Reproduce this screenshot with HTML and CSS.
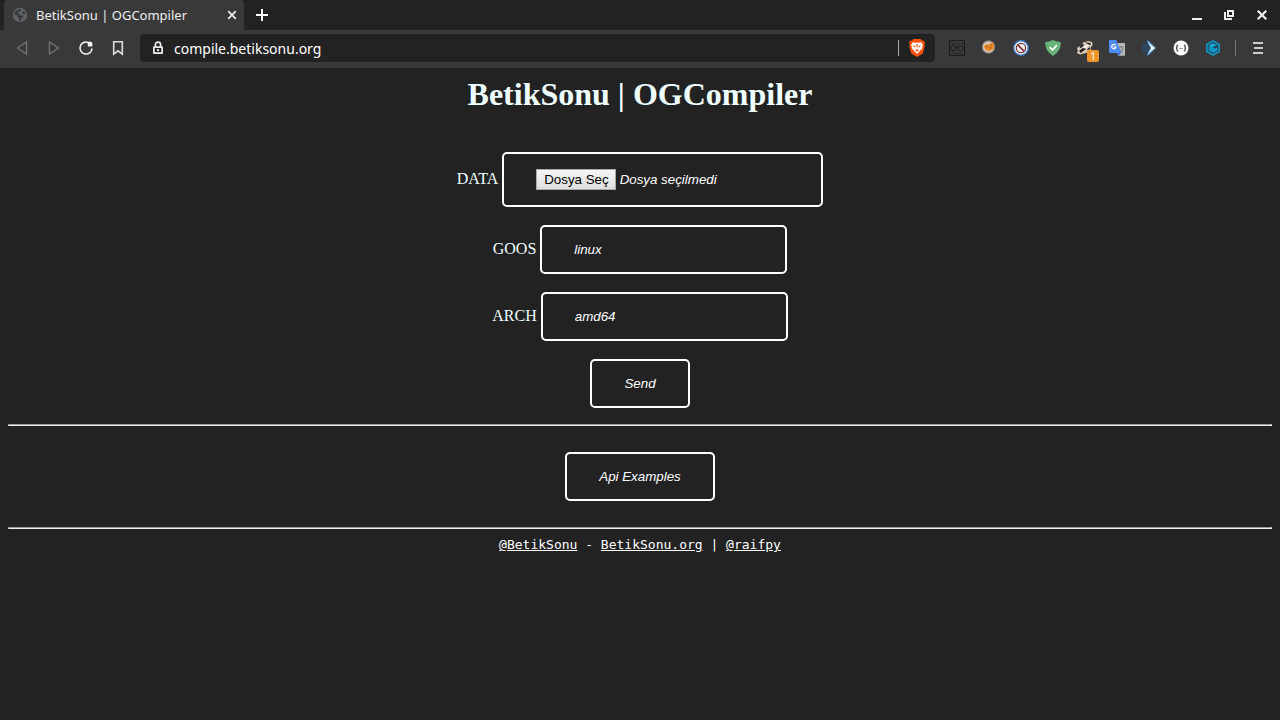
FILE: index.html
```html
<!DOCTYPE html>
<html lang="tr">
<head>
<meta charset="utf-8">
<title>BetikSonu | OGCompiler</title>
<link rel="stylesheet" href="styles.css">
</head>
<body>
<header class="browser">
  <div class="tabbar">
    <div class="tab">
      <svg class="icon" viewBox="0 0 16 16"><circle cx="8" cy="8" r="7.200" fill="#5f6368"/><path d="M9.500 2.500l-1 1.700-2.200.8-.5 1.600 1.700.3.500 1.400 2.500.2.800 1.300-1.800 1.200-.5 2.500-2 .5.200-2.500L5.600 10l.2-1.300L2.300 7.500Q2.800 3 8 2.200zM11 4.200l1.200.2 1.500 2.800-2.200.3-1.300-1.700z" fill="#393939"/></svg>
      <span class="tab-title">BetikSonu | OGCompiler</span>
      <button class="tool" aria-label="Sekmeyi kapat"><svg class="icon" viewBox="0 0 16 16"><path d="M4.200 4.200l7.600 7.600M11.800 4.200l-7.600 7.600" stroke="#eee" stroke-width="1.700"/></svg></button>
    </div>
    <button class="tool new-tab" aria-label="Yeni sekme"><svg class="icon" viewBox="0 0 16 16"><path d="M8 2v12M2 8h12" stroke="#fff" stroke-width="2"/></svg></button>
    <div class="window-controls">
      <button class="tool" aria-label="Küçült"><svg class="icon" viewBox="0 0 16 16"><path d="M2 12h10" stroke="#eee" stroke-width="2"/></svg></button>
      <button class="tool" aria-label="Geri yükle"><svg class="icon" viewBox="0 0 16 16"><path d="M6 4h5v5H6z" fill="none" stroke="#eee" stroke-width="2"/><path d="M3 5v7h7" fill="none" stroke="#eee" stroke-width="2"/></svg></button>
      <button class="tool" aria-label="Kapat"><svg class="icon" viewBox="0 0 16 16"><path d="M3.700 3.700l8.600 8.600M12.300 3.700l-8.600 8.600" stroke="#eee" stroke-width="2.200"/></svg></button>
    </div>
  </div>
  <div class="toolbar">
    <nav class="nav">
      <button class="tool" aria-label="Geri"><svg class="icon" viewBox="0 0 16 16"><path d="M12.600 1.900v12.200L3.400 8z" fill="none" stroke="#737373" stroke-width="1.300" stroke-linejoin="round"/></svg></button>
      <button class="tool" aria-label="İleri"><svg class="icon" viewBox="0 0 16 16"><path d="M3.400 1.900v12.200L12.600 8z" fill="none" stroke="#737373" stroke-width="1.300" stroke-linejoin="round"/></svg></button>
      <button class="tool" aria-label="Yenile"><svg class="icon" viewBox="0 0 16 16"><path d="M10 2.400A6 6 0 1 0 14 8.500" fill="none" stroke="#f1f1f1" stroke-width="1.600"/><path d="M9.500 2l2.500-.5 2.300 1v4h-4.300z" fill="#f1f1f1"/></svg></button>
      <button class="tool" aria-label="Yer imi"><svg class="icon" viewBox="0 0 16 16"><path d="M3.700 1.800h8.600v12.400L8 10.800l-4.300 3.400z" fill="none" stroke="#ddd" stroke-width="1.600"/></svg></button>
    </nav>
    <div class="address">
      <svg class="icon" viewBox="0 0 16 16"><path d="M5.400 7V4.800a2.600 2.600 0 0 1 5.200 0V7" fill="none" stroke="#eee" stroke-width="1.700"/><path fill="#eee" fill-rule="evenodd" d="M4 6.200h8q1 0 1 1V13q0 1-1 1H4q-1 0-1-1V7.200q0-1 1-1zM4.700 8v4.300h6.600V8z"/><circle cx="8" cy="10.100" r="1.200" fill="#eee"/></svg>
      <input class="url" type="text" aria-label="Adres" value="compile.betiksonu.org">
      <span class="divider light"></span>
      <svg class="shield" viewBox="0 0 18 18"><path d="M5.500 0h7l1.600 1.700 1.400-.2 1.500 2.300-.6 1.500.4 1.200-2 8L9 18l-5.800-3.500-2-8 .4-1.200L1 3.800l1.500-2.300 1.400.2z" fill="#fb5008"/><path d="M5 3.300l2 .5 2-.4 2 .4 2-.5 2 2.600-.8 1.700.1 1.700-2 2.300L9 15l-3.300-3.400-2-2.300.1-1.700L3 5.900z" fill="#fff"/><path d="M4.700 6.300l2.700.7-.6 1.700zM13.300 6.300l-2.700.7.600 1.700zM8.200 5h1.600L9 10.400zM6.700 11.100L9 10.400l2.300.7L9 12.700z" fill="#fb5008"/></svg>
    </div>
    <div class="extensions">
      <button class="tool" aria-label="Eklenti"><svg class="icon" viewBox="0 0 16 16"><g fill="none" stroke="#1b1b1b"><path d="M.5.5h15v15H.500z"/><path d="M1 3.500h5l2 1.500 2-1.500h5M2 13.500h12" stroke-opacity=".5"/><path d="M6.800 7.500q1.200-1 2.400 0"/><circle cx="4.200" cy="8.200" r="2.700"/><circle cx="11.800" cy="8.200" r="2.700"/></g></svg></button>
      <button class="tool" aria-label="Çerezler"><svg class="icon" viewBox="0 0 16 16"><circle cx="7.500" cy="7" r="6.700" fill="#858585"/><circle cx="7.500" cy="7" r="5.600" fill="#d8c7b5"/><path d="M2.300 7.300l3.100-3.400 3.200.7L11 2l2.200 3-.6 4-4 2.300-3.800-1-1-2z" fill="#eb8825"/><path d="M5 6.600l2 .4M8.500 8.400l2-1M9 4.700l1.500.3" stroke="#8e5a2b"/></svg></button>
      <button class="tool" aria-label="Engelleyici"><svg class="icon" viewBox="0 0 16 16"><circle cx="8" cy="8" r="7.900" fill="#397fcf"/><circle cx="8" cy="8" r="6.500" fill="#fff"/><circle cx="8" cy="8" r="4.700" fill="#f5f5f5" stroke="#80343c" stroke-width="1.300"/><path d="M4.700 4.800l6.600 6.500" stroke="#80343c" stroke-width="1.800"/></svg></button>
      <button class="tool" aria-label="Koruma"><svg class="icon" viewBox="0 0 16 16"><path d="M8 0q4 2 7.700 2.100.6 9-7.700 13.900Q-.3 11.100.3 2.100 4 2 8 0z" fill="#67b279"/><path d="M4.700 7.200l2.800 2.900 4.400-5" fill="none" stroke="#fff" stroke-width="1.700"/></svg></button>
      <button class="tool badge-host" aria-label="Porsuk"><svg class="icon" viewBox="0 0 16 16"><path d="M1 7l4-2 1-2.500 5-1.500 4 1 .8 3-2 2 .2 3-5 3-6 1.500-3-1.500 1-3-1-1z" fill="#dac7b6"/><path d="M2 7l4-3 1 1-3 3zM8 2.300l5 .7 1.300 2-3-.4zM2 11l4-3 3 1-3 2-2 2zM12.500 7l1 2-4 1.500z" fill="#181818"/><path d="M6 7l5-3 1 2-4 2z" fill="#fff"/></svg><span class="badge">1</span></button>
      <button class="tool" aria-label="Çeviri"><svg class="icon" viewBox="0 0 16 16"><path d="M6 3h10v12.700H9z" fill="#b7b9bb"/><path d="M9 7h6M12 6v1M10 8q1 3 4 5M14 8q-1 4-4 5" fill="none" stroke="#687d85"/><path d="M0 0h7.300L12 13H1q-1 0-1-1z" fill="#4b8bf4"/><path d="M8 13h4l-2.200 2.800z" fill="#3465ce"/><path d="M6.500 5.100A2.200 2.200 0 1 0 7 7.200H4.800" fill="none" stroke="#fff" stroke-width="1.200"/></svg></button>
      <button class="tool" aria-label="Ok"><svg class="icon" viewBox="0 0 16 16"><path d="M5.500.8h2L15 8l-7.500 7.200h-2L9.500 8z" fill="#4f9fe0"/><path d="M7 2.300L14 8l-7 5.700L10.300 8z" fill="#e9f7ff"/><path d="M1 5h6M2 8h7M1 11h6" stroke="#245482" stroke-width="1.300"/></svg></button>
      <button class="tool" aria-label="Betikler"><svg class="icon" viewBox="0 0 16 16"><circle cx="8" cy="8" r="7.500" fill="#fff"/><path d="M5.200 5Q3.600 5 4 6.500 4.200 8 3 8q1.200 0 1 1.500-.4 1.500 1.200 1.500M10.800 5q1.600 0 1.200 1.500Q11.800 8 13 8q-1.200 0-1 1.500.4 1.500-1.200 1.500" fill="none" stroke="#333" stroke-width="1.100"/><path d="M6.300 8.500h3.400" stroke="#999"/></svg></button>
      <button class="tool" aria-label="Küp"><svg class="icon" viewBox="0 0 16 16"><path d="M8 .9l6.200 3.600v7L8 15.100l-6.200-3.600v-7z" fill="#20495a" stroke="#129acb" stroke-width="1.500"/><path d="M8 3.300l4.200 2.400L8 8 3.800 5.700z" fill="#19aede"/><path d="M3.800 5.700L8 8v5l-4.200-2.400z" fill="#0b93c6"/><path d="M8 8l4.200-.7v3.300L8 13z" fill="#129fd0"/><path d="M7.600 6.600l4.600-.9v1.900L9.300 8.700z" fill="#174353"/></svg></button>
      <span class="divider"></span>
      <button class="tool" aria-label="Menü"><svg class="icon" viewBox="0 0 16 16"><path d="M3 3h10M4 8h9M3 13h10" stroke="#ccc" stroke-width="2"/></svg></button>
    </div>
  </div>
</header>
<main class="page">
  <h1 class="title">BetikSonu | OGCompiler</h1>
  <form class="form" onsubmit="return false">
    <div class="row">
      <label for="data">DATA</label>
      <div class="box file-box">
        <input class="file-input" id="data" type="file">
        <label class="file-button" for="data">Dosya Seç</label>
        <span>Dosya seçilmedi</span>
      </div>
    </div>
    <div class="row"><label for="goos">GOOS</label><input class="box field" id="goos" type="text" value="linux"></div>
    <div class="row"><label for="arch">ARCH</label><input class="box field" id="arch" type="text" value="amd64"></div>
    <button class="box" type="submit">Send</button>
  </form>
  <hr class="rule">
  <div class="examples"><button class="box" type="button">Api Examples</button></div>
  <hr class="rule">
  <footer class="footer"><a href="#">@BetikSonu</a> - <a href="#">BetikSonu.org</a> | <a href="#">@raifpy</a></footer>
</main>
</body>
</html>
```
FILE: styles.css
```css
* { box-sizing: border-box; }
body {
  margin: 0;
  background: #222;
  color: azure;
  font-family: "Liberation Serif", serif;
  font-size: 16px;
}
.browser { font-family: "Noto Sans", sans-serif; color: #eee; }
.tabbar { display: flex; align-items: center; height: 30px; padding: 0 10px 0 4px; background: #222; }
.tab {
  display: flex;
  align-items: center;
  gap: 8px;
  width: 240px;
  height: 30px;
  padding: 0 4px 0 8px;
  border-radius: 4px 4px 0 0;
  background: #393939;
}
.tab-title { flex: 1; font-size: 13px; white-space: nowrap; }
.icon { display: block; width: 16px; height: 16px; flex: none; }
.tool { flex: none; padding: 0; border: 0; background: none; }
.new-tab { margin-left: 10px; }
.window-controls { display: flex; gap: 16px; margin-left: auto; }
.toolbar { display: flex; align-items: center; height: 38px; padding: 0 14px 2px; background: #393939; }
.nav { display: flex; gap: 16px; }
.address {
  display: flex;
  align-items: center;
  flex: 1;
  height: 28px;
  margin: 0 14px;
  padding: 0 9px 0 10px;
  border-radius: 4px;
  background: #222;
}
.url {
  flex: 1;
  min-width: 0;
  padding: 0 8px;
  border: 0;
  background: none;
  color: #fff;
  font-family: inherit;
  font-size: 14px;
}
.divider { width: 1px; height: 16px; background: #777; }
.light { margin-right: 9px; background: #aaa; }
.shield { width: 18px; height: 18px; }
.extensions { display: flex; align-items: center; gap: 16px; }
.extensions .divider { margin: 0 -2px; }
.badge-host { position: relative; }
.badge {
  position: absolute;
  top: 10px;
  left: 10px;
  width: 12px;
  height: 12px;
  border-radius: 2px;
  background: #ed9528;
  color: #fff;
  font: 10px/12px "Noto Sans", sans-serif;
  text-align: center;
}
.page { padding: 8px; }
.title { margin: 0 0 39px; font-size: 32px; line-height: 37px; text-align: center; }
.form { display: flex; flex-direction: column; align-items: center; gap: 18px; }
.row { display: flex; align-items: baseline; gap: 4px; }
.box {
  padding: 15px 32px;
  border: 2px solid #fff;
  border-radius: 5px;
  background: transparent;
  color: #fff;
  font: italic 10pt/15px "Liberation Sans", sans-serif;
}
.field { width: 247px; }
.file-box { position: relative; display: flex; align-items: baseline; gap: 4px; width: 321px; }
.file-input { position: absolute; width: 1px; height: 1px; opacity: 0; }
.file-button {
  padding: 2px 6px 2px 7px;
  border: 1px solid #a9a9a9;
  background: linear-gradient(#f6f6f6, #dedede);
  color: #000;
  font-style: normal;
}
.rule { margin: 16px 0 0; border: 1px inset #eee; }
.examples { display: flex; justify-content: center; padding: 26px 0 10px; }
.footer {
  margin-top: 8px;
  color: #fff;
  font-family: "DejaVu Sans Mono", monospace;
  font-size: 13px;
  line-height: 16px;
  text-align: center;
}
.footer a { color: #fff; }
```
